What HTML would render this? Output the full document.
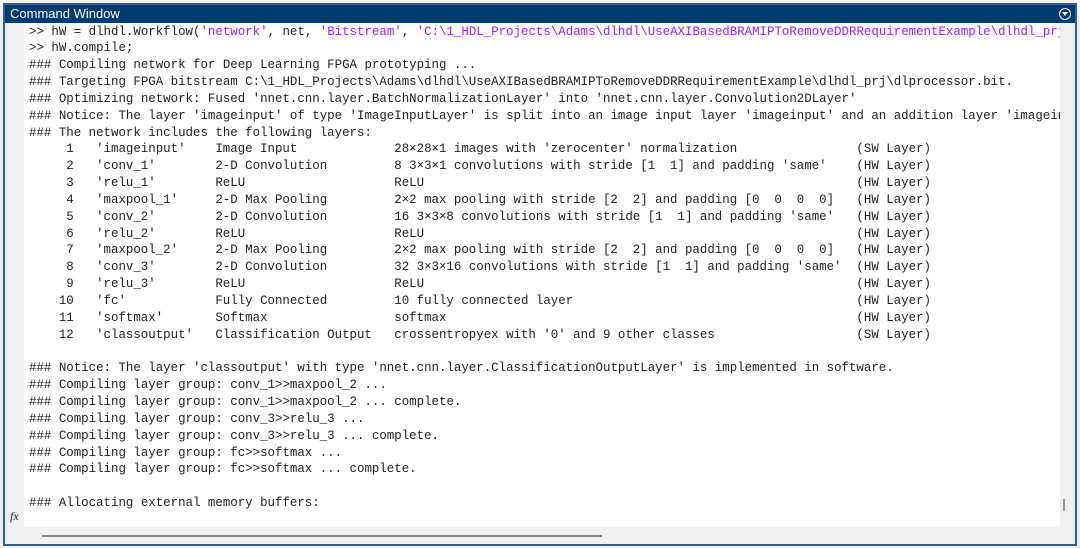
<!DOCTYPE html>
<html><head><meta charset="utf-8"><style>
html,body{margin:0;padding:0;background:#f0f0f0;width:1080px;height:548px;overflow:hidden}
.win{position:absolute;left:3px;top:3px;width:1070px;height:539px;border:2px solid #2f5f9a;background:#f0f0f0}
.title{position:absolute;left:0;top:0;width:1070px;height:18px;background:#003b6f;color:#fff;font:13px "Liberation Sans",sans-serif;line-height:18px;padding-left:5px;box-sizing:border-box}
.dd{position:absolute;right:4px;top:3px;width:10px;height:10px;border:1.5px solid #fff;border-radius:50%}
.dd:after{content:"";position:absolute;left:2px;top:3px;border-left:3px solid transparent;border-right:3px solid transparent;border-top:4px solid #fff}
.content{position:absolute;left:19px;top:18px;width:1036px;height:504px;background:#fff;overflow:hidden}
.t{font-family:"Liberation Mono",monospace;font-size:12.43px;line-height:16.85px;color:#222;position:absolute;left:5px;top:0.5px}
.l{height:16.85px;position:relative;white-space:pre}
.p{color:#a020f0}
.l span.c{position:absolute}
.fx{position:absolute;left:5px;top:504px;font:italic 12px "Liberation Serif",serif;color:#222}
.sb{position:absolute;left:37px;top:530px;width:560px;height:2px;background:#888}
.vs{position:absolute;left:1063px;top:499px;width:2px;height:12px;background:#999}
</style></head><body>
<div class="win">
<div class="title">Command Window<div class="dd"></div></div>
<div class="content"><div class="t"><div class="l">&gt;&gt; hW = dlhdl.Workflow(<span class="p">'network'</span>, net, <span class="p">'Bitstream'</span>, <span class="p">'C:\1_HDL_Projects\Adams\dlhdl\UseAXIBasedBRAMIPToRemoveDDRRequirementExample\dlhdl_prj\dlprocessor.bit'</span>);</div><div class="l">&gt;&gt; hW.compile;</div><div class="l">### Compiling network for Deep Learning FPGA prototyping ...</div><div class="l">### Targeting FPGA bitstream C:\1_HDL_Projects\Adams\dlhdl\UseAXIBasedBRAMIPToRemoveDDRRequirementExample\dlhdl_prj\dlprocessor.bit.</div><div class="l">### Optimizing network: Fused 'nnet.cnn.layer.BatchNormalizationLayer' into 'nnet.cnn.layer.Convolution2DLayer'</div><div class="l">### Notice: The layer 'imageinput' of type 'ImageInputLayer' is split into an image input layer 'imageinput' and an addition layer 'imageinput_norm'</div><div class="l">### The network includes the following layers:</div><div class="l"><span class="c" style="left:5ch">1</span><span class="c" style="left:9ch">'imageinput'</span><span class="c" style="left:25ch">Image Input</span><span class="c" style="left:49ch">28×28×1 images with 'zerocenter' normalization</span><span class="c" style="left:111ch">(SW Layer)</span></div><div class="l"><span class="c" style="left:5ch">2</span><span class="c" style="left:9ch">'conv_1'</span><span class="c" style="left:25ch">2-D Convolution</span><span class="c" style="left:49ch">8 3×3×1 convolutions with stride [1  1] and padding 'same'</span><span class="c" style="left:111ch">(HW Layer)</span></div><div class="l"><span class="c" style="left:5ch">3</span><span class="c" style="left:9ch">'relu_1'</span><span class="c" style="left:25ch">ReLU</span><span class="c" style="left:49ch">ReLU</span><span class="c" style="left:111ch">(HW Layer)</span></div><div class="l"><span class="c" style="left:5ch">4</span><span class="c" style="left:9ch">'maxpool_1'</span><span class="c" style="left:25ch">2-D Max Pooling</span><span class="c" style="left:49ch">2×2 max pooling with stride [2  2] and padding [0  0  0  0]</span><span class="c" style="left:111ch">(HW Layer)</span></div><div class="l"><span class="c" style="left:5ch">5</span><span class="c" style="left:9ch">'conv_2'</span><span class="c" style="left:25ch">2-D Convolution</span><span class="c" style="left:49ch">16 3×3×8 convolutions with stride [1  1] and padding 'same'</span><span class="c" style="left:111ch">(HW Layer)</span></div><div class="l"><span class="c" style="left:5ch">6</span><span class="c" style="left:9ch">'relu_2'</span><span class="c" style="left:25ch">ReLU</span><span class="c" style="left:49ch">ReLU</span><span class="c" style="left:111ch">(HW Layer)</span></div><div class="l"><span class="c" style="left:5ch">7</span><span class="c" style="left:9ch">'maxpool_2'</span><span class="c" style="left:25ch">2-D Max Pooling</span><span class="c" style="left:49ch">2×2 max pooling with stride [2  2] and padding [0  0  0  0]</span><span class="c" style="left:111ch">(HW Layer)</span></div><div class="l"><span class="c" style="left:5ch">8</span><span class="c" style="left:9ch">'conv_3'</span><span class="c" style="left:25ch">2-D Convolution</span><span class="c" style="left:49ch">32 3×3×16 convolutions with stride [1  1] and padding 'same'</span><span class="c" style="left:111ch">(HW Layer)</span></div><div class="l"><span class="c" style="left:5ch">9</span><span class="c" style="left:9ch">'relu_3'</span><span class="c" style="left:25ch">ReLU</span><span class="c" style="left:49ch">ReLU</span><span class="c" style="left:111ch">(HW Layer)</span></div><div class="l"><span class="c" style="left:4ch">10</span><span class="c" style="left:9ch">'fc'</span><span class="c" style="left:25ch">Fully Connected</span><span class="c" style="left:49ch">10 fully connected layer</span><span class="c" style="left:111ch">(HW Layer)</span></div><div class="l"><span class="c" style="left:4ch">11</span><span class="c" style="left:9ch">'softmax'</span><span class="c" style="left:25ch">Softmax</span><span class="c" style="left:49ch">softmax</span><span class="c" style="left:111ch">(HW Layer)</span></div><div class="l"><span class="c" style="left:4ch">12</span><span class="c" style="left:9ch">'classoutput'</span><span class="c" style="left:25ch">Classification Output</span><span class="c" style="left:49ch">crossentropyex with '0' and 9 other classes</span><span class="c" style="left:111ch">(SW Layer)</span></div><div class="l"> </div><div class="l">### Notice: The layer 'classoutput' with type 'nnet.cnn.layer.ClassificationOutputLayer' is implemented in software.</div><div class="l">### Compiling layer group: conv_1&gt;&gt;maxpool_2 ...</div><div class="l">### Compiling layer group: conv_1&gt;&gt;maxpool_2 ... complete.</div><div class="l">### Compiling layer group: conv_3&gt;&gt;relu_3 ...</div><div class="l">### Compiling layer group: conv_3&gt;&gt;relu_3 ... complete.</div><div class="l">### Compiling layer group: fc&gt;&gt;softmax ...</div><div class="l">### Compiling layer group: fc&gt;&gt;softmax ... complete.</div><div class="l"> </div><div class="l">### Allocating external memory buffers:</div></div></div>
<div class="fx">fx</div>
<div class="sb"></div>
</div>
<div class="vs"></div>
</body></html>
